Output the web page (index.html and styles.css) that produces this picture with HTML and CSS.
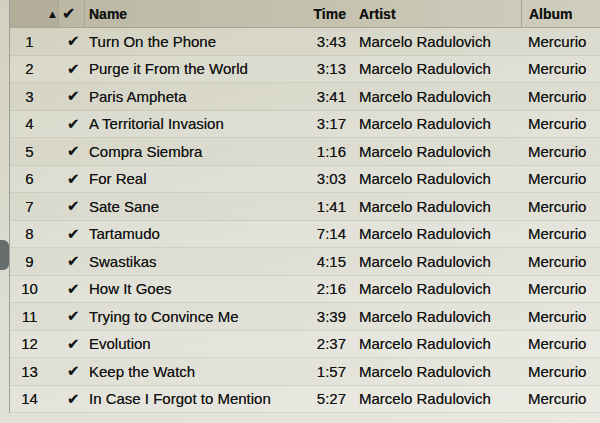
FILE: index.html
```html
<!DOCTYPE html>
<html lang="en">
<head>
    <meta charset="UTF-8">
    <title>Mercurio - Songs</title>
    <link rel="stylesheet" href="styles.css">
</head>
<body>
    <div class="scroll-pill"></div>
    <div class="songs">
        <div class="row head">
            <div class="cell num">▲</div>
            <div class="cell chk">✔</div>
            <div class="cell name">Name</div>
            <div class="cell time">Time</div>
            <div class="cell artist">Artist</div>
            <div class="cell album">Album</div>
        </div>
        <div class="row"><div class="cell num">1</div><div class="cell chk">✔</div><div class="cell name">Turn On the Phone</div><div class="cell time">3:43</div><div class="cell artist">Marcelo Radulovich</div><div class="cell album">Mercurio</div></div>
        <div class="row"><div class="cell num">2</div><div class="cell chk">✔</div><div class="cell name">Purge it From the World</div><div class="cell time">3:13</div><div class="cell artist">Marcelo Radulovich</div><div class="cell album">Mercurio</div></div>
        <div class="row"><div class="cell num">3</div><div class="cell chk">✔</div><div class="cell name">Paris Ampheta</div><div class="cell time">3:41</div><div class="cell artist">Marcelo Radulovich</div><div class="cell album">Mercurio</div></div>
        <div class="row"><div class="cell num">4</div><div class="cell chk">✔</div><div class="cell name">A Territorial Invasion</div><div class="cell time">3:17</div><div class="cell artist">Marcelo Radulovich</div><div class="cell album">Mercurio</div></div>
        <div class="row"><div class="cell num">5</div><div class="cell chk">✔</div><div class="cell name">Compra Siembra</div><div class="cell time">1:16</div><div class="cell artist">Marcelo Radulovich</div><div class="cell album">Mercurio</div></div>
        <div class="row"><div class="cell num">6</div><div class="cell chk">✔</div><div class="cell name">For Real</div><div class="cell time">3:03</div><div class="cell artist">Marcelo Radulovich</div><div class="cell album">Mercurio</div></div>
        <div class="row"><div class="cell num">7</div><div class="cell chk">✔</div><div class="cell name">Sate Sane</div><div class="cell time">1:41</div><div class="cell artist">Marcelo Radulovich</div><div class="cell album">Mercurio</div></div>
        <div class="row"><div class="cell num">8</div><div class="cell chk">✔</div><div class="cell name">Tartamudo</div><div class="cell time">7:14</div><div class="cell artist">Marcelo Radulovich</div><div class="cell album">Mercurio</div></div>
        <div class="row"><div class="cell num">9</div><div class="cell chk">✔</div><div class="cell name">Swastikas</div><div class="cell time">4:15</div><div class="cell artist">Marcelo Radulovich</div><div class="cell album">Mercurio</div></div>
        <div class="row"><div class="cell num">10</div><div class="cell chk">✔</div><div class="cell name">How It Goes</div><div class="cell time">2:16</div><div class="cell artist">Marcelo Radulovich</div><div class="cell album">Mercurio</div></div>
        <div class="row"><div class="cell num">11</div><div class="cell chk">✔</div><div class="cell name">Trying to Convince Me</div><div class="cell time">3:39</div><div class="cell artist">Marcelo Radulovich</div><div class="cell album">Mercurio</div></div>
        <div class="row"><div class="cell num">12</div><div class="cell chk">✔</div><div class="cell name">Evolution</div><div class="cell time">2:37</div><div class="cell artist">Marcelo Radulovich</div><div class="cell album">Mercurio</div></div>
        <div class="row"><div class="cell num">13</div><div class="cell chk">✔</div><div class="cell name">Keep the Watch</div><div class="cell time">1:57</div><div class="cell artist">Marcelo Radulovich</div><div class="cell album">Mercurio</div></div>
        <div class="row"><div class="cell num">14</div><div class="cell chk">✔</div><div class="cell name">In Case I Forgot to Mention</div><div class="cell time">5:27</div><div class="cell artist">Marcelo Radulovich</div><div class="cell album">Mercurio</div></div>
    </div>
</body>
</html>
```
FILE: styles.css
```css
body {
    margin: 0;
    height: 423px;
    overflow: hidden;
    font-family: 'Liberation Sans', Arial, sans-serif;
    color: #111212;
    background: linear-gradient(160deg, #d2d1c0 0%, #dcdcd1 45%, #e9e8e1 100%);
}

.songs {
    border-left: 1px solid #9c9f98;
    margin-left: 9px;
}

.row {
    display: grid;
    grid-template-columns: 49px 26px 216px 48px 172px 1fr;
    height: 27.5px;
    align-items: center;
    font-size: 15px;
    text-shadow: 0 0 0.6px rgba(0, 0, 0, 0.6);
    border-bottom: 1px solid rgba(160, 160, 145, 0.25);
    box-sizing: border-box;
}

.row:nth-child(odd) {
    background-color: rgba(255, 255, 255, 0.12);
}

.row.head {
    height: 28px;
    font-size: 14px;
    font-weight: bold;
    background: linear-gradient(90deg, #bab6a2 0%, #c6c4b1 60%, #cfcdbd 100%);
    border-bottom: 1px solid #a9a792;
}

.row.head .cell {
    height: 100%;
    display: flex;
    align-items: center;
}

.cell {
    white-space: nowrap;
    overflow: hidden;
}

.num {
    text-align: center;
    padding-right: 10px;
}

.head .num {
    justify-content: flex-end;
    padding-right: 0;
    font-size: 11px;
    background-color: rgba(120, 115, 90, 0.12);
    border-right: 1px solid #a9a792;
}

.chk {
    font-family: 'DejaVu Sans', sans-serif;
    font-size: 15px;
    padding-left: 8px;
}

.head .chk {
    font-size: 16px;
    padding-left: 3px;
    border-right: 1px solid #aaa894;
}

.name {
    padding-left: 4px;
}

.time {
    text-align: right;
    padding-right: 3px;
}

.head .time {
    justify-content: flex-end;
}

.artist {
    padding-left: 10px;
}

.album {
    padding-left: 7px;
}

.head .album {
    border-left: 1px solid #a4a290;
}

.scroll-pill {
    position: absolute;
    left: 0;
    top: 240px;
    width: 9px;
    height: 30px;
    border-radius: 0 6px 6px 0;
    background-color: #666d6c;
}
```
